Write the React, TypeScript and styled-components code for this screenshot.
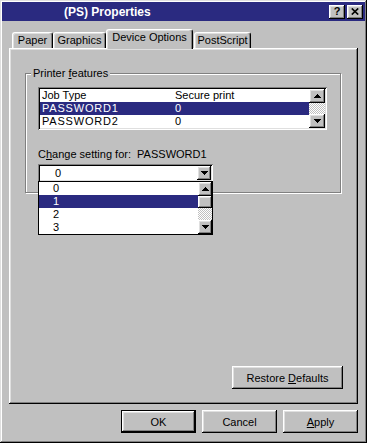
import React from 'react'
import styled, { createGlobalStyle, css } from 'styled-components'

const GlobalStyle = createGlobalStyle`
    html, body {
        margin: 0;
        padding: 0;
        background: #c0c0c0;
    }
    body {
        font-family: 'Liberation Sans', Arial, sans-serif;
        font-size: 11px;
        color: #000;
    }
    * {
        box-sizing: border-box;
    }
`

const raised = css`
    box-shadow: inset -1px -1px #000, inset 1px 1px #fff, inset -2px -2px #808080, inset 2px 2px #dfdfdf;
`
const sunken = css`
    box-shadow: inset 1px 1px #808080, inset -1px -1px #fff, inset 2px 2px #000, inset -2px -2px #dfdfdf;
`
const checker = css`
    background-color: #c0c0c0;
    background-image: conic-gradient(#fff 25%, #c0c0c0 0 50%, #fff 0 75%, #c0c0c0 0);
    background-size: 2px 2px;
`

const Window = styled.div`
    width: 367px;
    height: 443px;
    padding: 2px;
    display: flex;
    flex-direction: column;
    background: #c0c0c0;
    box-shadow: inset -1px -1px #000, inset 1px 1px #dfdfdf, inset -2px -2px #808080, inset 2px 2px #fff;
`
const TitleBar = styled.div`
    height: 19px;
    display: flex;
    align-items: center;
    padding: 0 2px 0 62px;
    background: #2a2a80;
`
const TitleText = styled.span`
    color: #fff;
    font-weight: bold;
    font-size: 12px;
`
const CaptionButtons = styled.div`
    margin-left: auto;
    display: flex;
    gap: 2px;
`
const CaptionButton = styled.div`
    width: 16px;
    height: 14px;
    display: flex;
    align-items: center;
    justify-content: center;
    background: #c0c0c0;
    font-weight: bold;
    font-size: 11px;
    line-height: 1;
    ${raised}
`
const Body = styled.div`
    padding: 8px 7px 0 7px;
    display: flex;
    flex-direction: column;
`
const TabStrip = styled.div`
    height: 19px;
    display: flex;
    align-items: flex-end;
    padding-left: 3px;
    position: relative;
    z-index: 1;
`
const Tab = styled.div<{ $w: number; $active?: boolean; $gap?: number }>`
    width: ${(p) => p.$w}px;
    height: ${(p) => (p.$active ? 20 : 16)}px;
    margin-bottom: ${(p) => (p.$active ? -1 : 0)}px;
    margin-left: ${(p) => p.$gap || 0}px;
    padding-top: 1px;
    display: flex;
    justify-content: center;
    line-height: 13px;
    background: #c0c0c0;
    border: 1px solid;
    border-color: #fff #000 transparent #fff;
    border-bottom: none;
    border-radius: 3px 3px 0 0;
    box-shadow: inset -1px 0 #808080, inset 1px 1px #dfdfdf;
`
const TabPanel = styled.div`
    height: 356px;
    padding: 0 15px 15px 16px;
    display: flex;
    flex-direction: column;
    ${raised}
`
const GroupBox = styled.fieldset`
    width: 316px;
    margin: 19px 0 0 0;
    padding: 7px 13px 10px 12px;
    border: 1px solid #808080;
    box-shadow: inset 1px 1px #fff, 1px 1px #fff;
`
const GroupLabel = styled.legend`
    padding: 0 2px;
    margin-left: -7px;
    line-height: 13px;
    background: #c0c0c0;
`
const Mnemonic = styled.u`
    text-decoration: underline;
    text-underline-offset: 1px;
`
const ListBox = styled.div`
    height: 43px;
    padding: 2px;
    display: flex;
    background: #fff;
    ${sunken}
`
const ListRows = styled.div`
    flex: 1;
`
const ListRow = styled.div<{ $selected?: boolean }>`
    display: grid;
    grid-template-columns: 133px 1fr;
    height: 13px;
    line-height: 13px;
    padding-left: 2px;
    background: ${(p) => (p.$selected ? '#2a2a80' : 'transparent')};
    color: ${(p) => (p.$selected ? '#fff' : '#000')};
`
const Caps = styled.span`
    letter-spacing: 0.8px;
`
const ScrollBar = styled.div<{ $w: number }>`
    width: ${(p) => p.$w}px;
    display: flex;
    flex-direction: column;
`
const ScrollButton = styled.div<{ $h: number }>`
    height: ${(p) => p.$h}px;
    display: flex;
    align-items: center;
    justify-content: center;
    background: #c0c0c0;
    ${raised}
`
const ScrollTrack = styled.div`
    flex: 1;
    ${checker}
`
const FieldLabel = styled.div`
    margin-top: 18px;
    line-height: 13px;
    white-space: pre;
`
const ComboWrap = styled.div`
    position: relative;
    width: 175px;
    margin-top: 3px;
`
const Combo = styled.div`
    height: 18px;
    padding: 2px;
    display: flex;
    align-items: center;
    background: #fff;
    ${sunken}
`
const ComboValue = styled.span`
    flex: 1;
    padding-left: 15px;
    line-height: 14px;
`
const ComboButton = styled.div`
    width: 14px;
    height: 14px;
    display: flex;
    align-items: center;
    justify-content: center;
    background: #c0c0c0;
    ${raised}
`
const DropList = styled.div`
    position: absolute;
    top: calc(100% - 1px);
    left: 0;
    width: 175px;
    display: flex;
    border: 1px solid #000;
    background: #fff;
    z-index: 2;
`
const DropItems = styled.div`
    flex: 1;
`
const DropItem = styled.div<{ $selected?: boolean }>`
    height: 13px;
    line-height: 13px;
    padding-left: 14px;
    background: ${(p) => (p.$selected ? '#2a2a80' : 'transparent')};
    color: ${(p) => (p.$selected ? '#fff' : '#000')};
`
const Button = styled.div<{ $w: number; $default?: boolean }>`
    width: ${(p) => p.$w}px;
    height: 23px;
    display: flex;
    align-items: center;
    justify-content: center;
    background: #c0c0c0;
    ${(p) =>
        p.$default
            ? css`
                  box-shadow: inset 0 0 0 1px #000, inset -2px -2px #000, inset 2px 2px #fff, inset -3px -3px #808080,
                      inset 3px 3px #dfdfdf;
              `
            : raised}
`
const RestoreButton = styled(Button)`
    margin-top: auto;
    align-self: flex-end;
`
const ButtonRow = styled.div`
    margin-top: 6px;
    display: flex;
    justify-content: flex-end;
    gap: 6px;
`

const Arrow = ({ up }: { up?: boolean }) => (
    <svg width="7" height="4" viewBox="0 0 7 4" shapeRendering="crispEdges">
        <polygon points={up ? '3.5,0 7,4 0,4' : '0,0 7,0 3.5,4'} fill="#000" />
    </svg>
)

const CloseGlyph = () => (
    <svg width="8" height="7" viewBox="0 0 8 7">
        <path d="M0.8 0.5 L7.2 6.5 M7.2 0.5 L0.8 6.5" stroke="#000" strokeWidth="1.7" />
    </svg>
)

export default function App() {
    return (
        <>
            <GlobalStyle />
            <Window>
                <TitleBar>
                    <TitleText>(PS) Properties</TitleText>
                    <CaptionButtons>
                        <CaptionButton>?</CaptionButton>
                        <CaptionButton>
                            <CloseGlyph />
                        </CaptionButton>
                    </CaptionButtons>
                </TitleBar>
                <Body>
                    <TabStrip>
                        <Tab $w={41}>Paper</Tab>
                        <Tab $w={53}>Graphics</Tab>
                        <Tab $w={87} $active>
                            Device Options
                        </Tab>
                        <Tab $w={57} $gap={1}>
                            PostScript
                        </Tab>
                    </TabStrip>
                    <TabPanel>
                        <GroupBox>
                            <GroupLabel>
                                Printer <Mnemonic>f</Mnemonic>eatures
                            </GroupLabel>
                            <ListBox>
                                <ListRows>
                                    <ListRow>
                                        <span>Job Type</span>
                                        <span>Secure print</span>
                                    </ListRow>
                                    <ListRow $selected>
                                        <Caps>PASSWORD1</Caps>
                                        <span>0</span>
                                    </ListRow>
                                    <ListRow>
                                        <Caps>PASSWORD2</Caps>
                                        <span>0</span>
                                    </ListRow>
                                </ListRows>
                                <ScrollBar $w={16}>
                                    <ScrollButton $h={14}>
                                        <Arrow up />
                                    </ScrollButton>
                                    <ScrollTrack />
                                    <ScrollButton $h={14}>
                                        <Arrow />
                                    </ScrollButton>
                                </ScrollBar>
                            </ListBox>
                            <FieldLabel>
                                C<Mnemonic>h</Mnemonic>ange setting for:{'  '}PASSWORD1
                            </FieldLabel>
                            <ComboWrap>
                                <Combo>
                                    <ComboValue>0</ComboValue>
                                    <ComboButton>
                                        <Arrow />
                                    </ComboButton>
                                </Combo>
                                <DropList>
                                    <DropItems>
                                        <DropItem>0</DropItem>
                                        <DropItem $selected>1</DropItem>
                                        <DropItem>2</DropItem>
                                        <DropItem>3</DropItem>
                                    </DropItems>
                                    <ScrollBar $w={14}>
                                        <ScrollButton $h={14}>
                                            <Arrow up />
                                        </ScrollButton>
                                        <ScrollButton $h={12} />
                                        <ScrollTrack />
                                        <ScrollButton $h={14}>
                                            <Arrow />
                                        </ScrollButton>
                                    </ScrollBar>
                                </DropList>
                            </ComboWrap>
                        </GroupBox>
                        <RestoreButton $w={111}>
                            Restore&nbsp;<Mnemonic>D</Mnemonic>efaults
                        </RestoreButton>
                    </TabPanel>
                    <ButtonRow>
                        <Button $w={75} $default>
                            OK
                        </Button>
                        <Button $w={75}>Cancel</Button>
                        <Button $w={75}>
                            <Mnemonic>A</Mnemonic>pply
                        </Button>
                    </ButtonRow>
                </Body>
            </Window>
        </>
    )
}
